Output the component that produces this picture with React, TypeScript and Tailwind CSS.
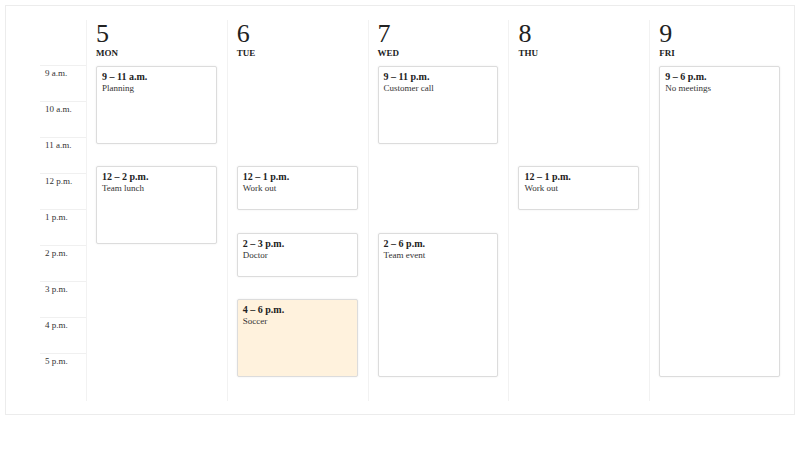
const hours = ["9 a.m.", "10 a.m.", "11 a.m.", "12 p.m.", "1 p.m.", "2 p.m.", "3 p.m.", "4 p.m.", "5 p.m."];

type CalEvent = { start: number; end: number; label: string; title: string; highlight?: boolean };

const days: { num: number; name: string; events: CalEvent[] }[] = [
  {
    num: 5,
    name: "MON",
    events: [
      { start: 9, end: 11, label: "9 – 11 a.m.", title: "Planning" },
      { start: 12, end: 14, label: "12 – 2 p.m.", title: "Team lunch" },
    ],
  },
  {
    num: 6,
    name: "TUE",
    events: [
      { start: 12, end: 13, label: "12 – 1 p.m.", title: "Work out" },
      { start: 14, end: 15, label: "2 – 3 p.m.", title: "Doctor" },
      { start: 16, end: 18, label: "4 – 6 p.m.", title: "Soccer", highlight: true },
    ],
  },
  {
    num: 7,
    name: "WED",
    events: [
      { start: 9, end: 11, label: "9 – 11 p.m.", title: "Customer call" },
      { start: 14, end: 18, label: "2 – 6 p.m.", title: "Team event" },
    ],
  },
  {
    num: 8,
    name: "THU",
    events: [{ start: 12, end: 13, label: "12 – 1 p.m.", title: "Work out" }],
  },
  {
    num: 9,
    name: "FRI",
    events: [{ start: 9, end: 18, label: "9 – 6 p.m.", title: "No meetings" }],
  },
];

const HOUR = 33.33;

const App = () => {
  return (
    <div className="h-[450px] w-[800px] bg-white p-[5px] font-['Liberation_Serif',serif] text-[#222]">
      <div className="flex h-[410px] border border-[#ececec] pt-[14px] pb-[13px] pl-[34px] pr-[4px]">
        {/* time labels */}
        <div className="w-[46px] shrink-0 pt-[45px]">
          {hours.map((h) => (
            <div key={h} className="h-[36px] border-t border-[#f0f0f0] pl-[5px] pt-[2px] text-[9px] leading-[11px] text-[#333]">
              {h}
            </div>
          ))}
        </div>

        {/* day columns */}
        <div className="grid flex-1 grid-cols-5">
          {days.map((day) => (
            <div key={day.num} className="relative border-l border-[#f2f2f2] px-[9px] pt-[2px]">
              <div className="text-[26px] leading-[22px] pt-[1px]">{day.num}</div>
              <div className="mt-[3px] text-[9px] font-bold leading-[10px]">{day.name}</div>
              {day.events.map((ev) => (
                <div
                  key={ev.label + ev.title}
                  className={`absolute left-[9px] right-[10px] rounded-[2px] border border-[#dcdcdc] px-[5px] py-[4px] shadow-[0_0_2px_rgba(0,0,0,0.08)] ${
                    ev.highlight ? "bg-[#fff2dd]" : "bg-white"
                  }`}
                  style={{ top: 46 + (ev.start - 9) * HOUR, height: (ev.end - ev.start) * HOUR + 11 }}
                >
                  <div className="text-[10px] font-bold leading-[12px]">{ev.label}</div>
                  <div className="text-[9px] leading-[11px] text-[#333]">{ev.title}</div>
                </div>
              ))}
            </div>
          ))}
        </div>
      </div>
    </div>
  );
};

export default App;
